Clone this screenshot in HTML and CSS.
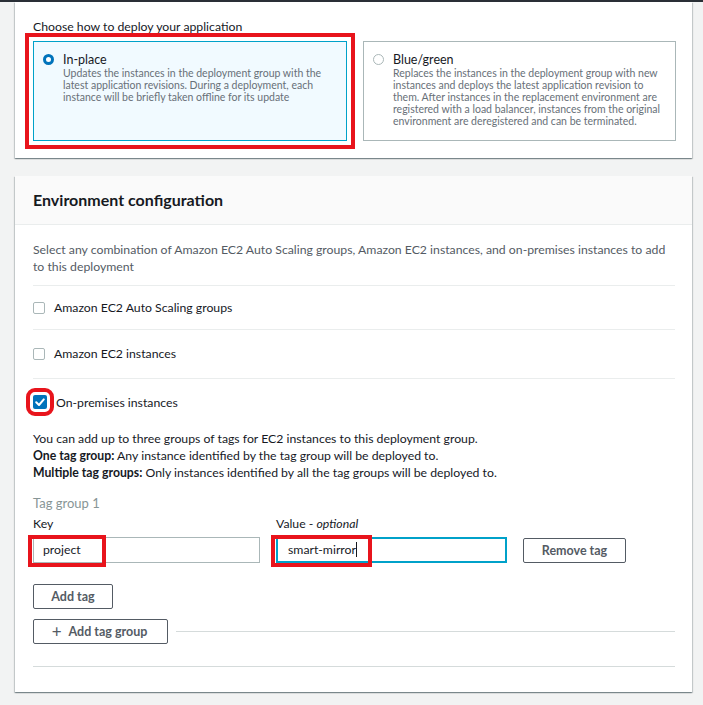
FILE: index.html
```html
<!DOCTYPE html>
<html lang="en">
<head>
    <meta charset="UTF-8">
    <meta name="viewport" content="width=device-width, initial-scale=1.0">
    <title>Create deployment group</title>
    <link rel="stylesheet" href="styles.css">
</head>
<body>
    <div class="topbar"></div>
    <div class="page">
        <section class="card card-top">
            <p class="field-label">Choose how to deploy your application</p>
            <div class="tiles">
                <div class="tile selected marked">
                    <span class="radio on"></span>
                    <div>
                        <div class="tile-title">In-place</div>
                        <div class="tile-desc">Updates the instances in the deployment group with the latest application revisions. During a deployment, each instance will be briefly taken offline for its update</div>
                    </div>
                </div>
                <div class="tile">
                    <span class="radio"></span>
                    <div>
                        <div class="tile-title">Blue/green</div>
                        <div class="tile-desc">Replaces the instances in the deployment group with new instances and deploys the latest application revision to them. After instances in the replacement environment are registered with a load balancer, instances from the original environment are deregistered and can be terminated.</div>
                    </div>
                </div>
            </div>
        </section>

        <section class="card">
            <div class="card-header">
                <h2>Environment configuration</h2>
            </div>
            <div class="card-body">
                <p class="desc">Select any combination of Amazon EC2 Auto Scaling groups, Amazon EC2 instances, and on-premises instances to add to this deployment</p>

                <div class="check-row first">
                    <span class="checkbox"></span>
                    <span>Amazon EC2 Auto Scaling groups</span>
                </div>
                <div class="check-row">
                    <span class="checkbox"></span>
                    <span>Amazon EC2 instances</span>
                </div>
                <div class="check-row last">
                    <span class="checkbox checked marked">
                        <svg viewBox="0 0 14 14" width="14" height="14"><path d="M3.2 7.2 L6 10 L10.8 4.4" fill="none" stroke="#fff" stroke-width="2" stroke-linecap="round" stroke-linejoin="round"/></svg>
                    </span>
                    <span>On-premises instances</span>
                </div>

                <div class="tag-info">
                    You can add up to three groups of tags for EC2 instances to this deployment group.<br>
                    <b>One tag group:</b> Any instance identified by the tag group will be deployed to.<br>
                    <b>Multiple tag groups:</b> Only instances identified by all the tag groups will be deployed to.
                </div>

                <div class="tag-group-title">Tag group 1</div>
                <div class="tag-grid">
                    <label class="input-label">Key</label>
                    <label class="input-label">Value - <i>optional</i></label>
                    <span></span>
                    <div class="input-wrap">
                        <div class="input">project</div>
                        <span class="mark mark-key"></span>
                    </div>
                    <div class="input-wrap">
                        <div class="input focused">smart-mirror<span class="caret"></span></div>
                        <span class="mark mark-value"></span>
                    </div>
                    <button class="btn">Remove tag</button>
                </div>

                <button class="btn add-tag">Add tag</button>
                <div class="group-row">
                    <button class="btn"><span class="plus">+</span>Add tag group</button>
                    <span class="rule"></span>
                </div>
                <div class="bottom-rule"></div>
            </div>
        </section>
    </div>
</body>
</html>
```

FILE: styles.css
```css
body {
    margin: 0;
    background-color: #f2f3f3;
    font-family: Lato, "Liberation Sans", Arial, sans-serif;
    font-size: 12.25px;
    color: #16191f;
}
.topbar {
    height: 2px;
    background-color: #2a2f36;
}
.page {
    padding: 0 11px 20px 15px;
}
.card {
    background-color: #fff;
    box-shadow: 0 1px 1px 0 rgba(0, 28, 36, 0.3), 1px 1px 1px 0 rgba(0, 28, 36, 0.15), -1px 1px 1px 0 rgba(0, 28, 36, 0.15);
    margin-bottom: 18px;
}
.card-top {
    padding: 17px 17px 17px 18px;
}
.field-label {
    margin: 0 0 6px;
    line-height: 16px;
    color: #16191f;
}
.tiles {
    display: grid;
    grid-template-columns: 314px 313px;
    gap: 16px;
}
.tile {
    display: flex;
    gap: 9px;
    height: 100px;
    box-sizing: border-box;
    padding: 10px 10px 0 9px;
    border: 1px solid #aab7b8;
    background-color: #fff;
}
.tile.selected {
    background-color: #f1faff;
    border-color: #00a1c9;
}
.marked {
    outline: 4px solid #e8141c;
    outline-offset: 4px;
}
.radio {
    flex: none;
    width: 11px;
    height: 11px;
    margin-top: 2px;
    border: 1px solid #aab7b8;
    border-radius: 50%;
    box-sizing: border-box;
    background-color: #fff;
}
.radio.on {
    border: 3.5px solid #0073bb;
}
.tile-title {
    font-size: 12.5px;
    line-height: 15px;
    color: #16191f;
}
.tile-desc {
    font-size: 10.5px;
    line-height: 12px;
    color: #687078;
}
.card-header {
    background-color: #fafafa;
    border-bottom: 1px solid #eaeded;
    padding: 15px 18px 15px;
}
.card-header h2 {
    margin: 0;
    font-size: 16px;
    line-height: 18px;
    font-weight: bold;
    color: #16191f;
}
.card-body {
    padding: 16px 17px 25px 18px;
}
.desc {
    margin: 0 0 10px;
    line-height: 17px;
    color: #545b64;
}
.check-row {
    display: flex;
    align-items: center;
    gap: 9px;
    height: 48px;
    border-top: 1px solid #eaeded;
    line-height: 16px;
    color: #16191f;
}
.check-row.first {
    height: 43px;
}
.check-row.last {
    height: 52px;
    align-items: flex-start;
    padding-top: 16px;
    box-sizing: border-box;
}
.checkbox {
    flex: none;
    display: flex;
    align-items: center;
    justify-content: center;
    width: 12px;
    height: 12px;
    border: 1px solid #aab7b8;
    border-radius: 2px;
    box-sizing: border-box;
}
.checkbox.checked {
    width: 14px;
    height: 14px;
    border: none;
    background-color: #0073bb;
    outline-offset: 3px;
}
.tag-info {
    line-height: 17px;
    color: #16191f;
}
.tag-info b {
    font-weight: bold;
}
.tag-group-title {
    margin-top: 14px;
    font-size: 13px;
    line-height: 16px;
    color: #879596;
}
.tag-grid {
    display: grid;
    grid-template-columns: 227px 231px 103px;
    column-gap: 16px;
    margin-top: 5px;
    align-items: center;
}
.input-label {
    line-height: 16px;
    margin-bottom: 5px;
    color: #16191f;
}
.input-wrap {
    position: relative;
}
.input {
    height: 26px;
    box-sizing: border-box;
    border: 1px solid #aab7b8;
    padding: 4px 9px;
    line-height: 16px;
    color: #16191f;
    background-color: #fff;
}
.input.focused {
    border: 2px solid #00a1c9;
    padding: 3px 10px;
}
.caret {
    display: inline-block;
    width: 1px;
    height: 15px;
    vertical-align: -3px;
    background-color: #16191f;
}
.mark {
    position: absolute;
    top: -2px;
    left: -5px;
    height: 32px;
    box-sizing: border-box;
    border: 4px solid #e8141c;
}
.mark-key {
    width: 78px;
}
.mark-value {
    width: 101px;
}
.btn {
    display: inline-flex;
    align-items: center;
    justify-content: center;
    height: 25px;
    box-sizing: border-box;
    padding: 0 14px;
    border: 1px solid #545b64;
    border-radius: 2px;
    background-color: #fff;
    font-family: inherit;
    font-size: 12.5px;
    font-weight: bold;
    color: #545b64;
}
.tag-grid .btn {
    width: 103px;
}
.add-tag {
    margin-top: 21px;
    width: 80px;
}
.group-row {
    display: flex;
    align-items: center;
    gap: 8px;
    margin-top: 10px;
}
.group-row .btn {
    padding: 0 14px 0 12px;
    width: 135px;
}
.plus {
    font-size: 17px;
    font-weight: normal;
    margin-right: 7px;
    line-height: 1;
}
.rule {
    flex: 1;
    border-top: 1px solid #d5dbdb;
}
.bottom-rule {
    margin-top: 22px;
    border-top: 1px solid #d5dbdb;
}
```
